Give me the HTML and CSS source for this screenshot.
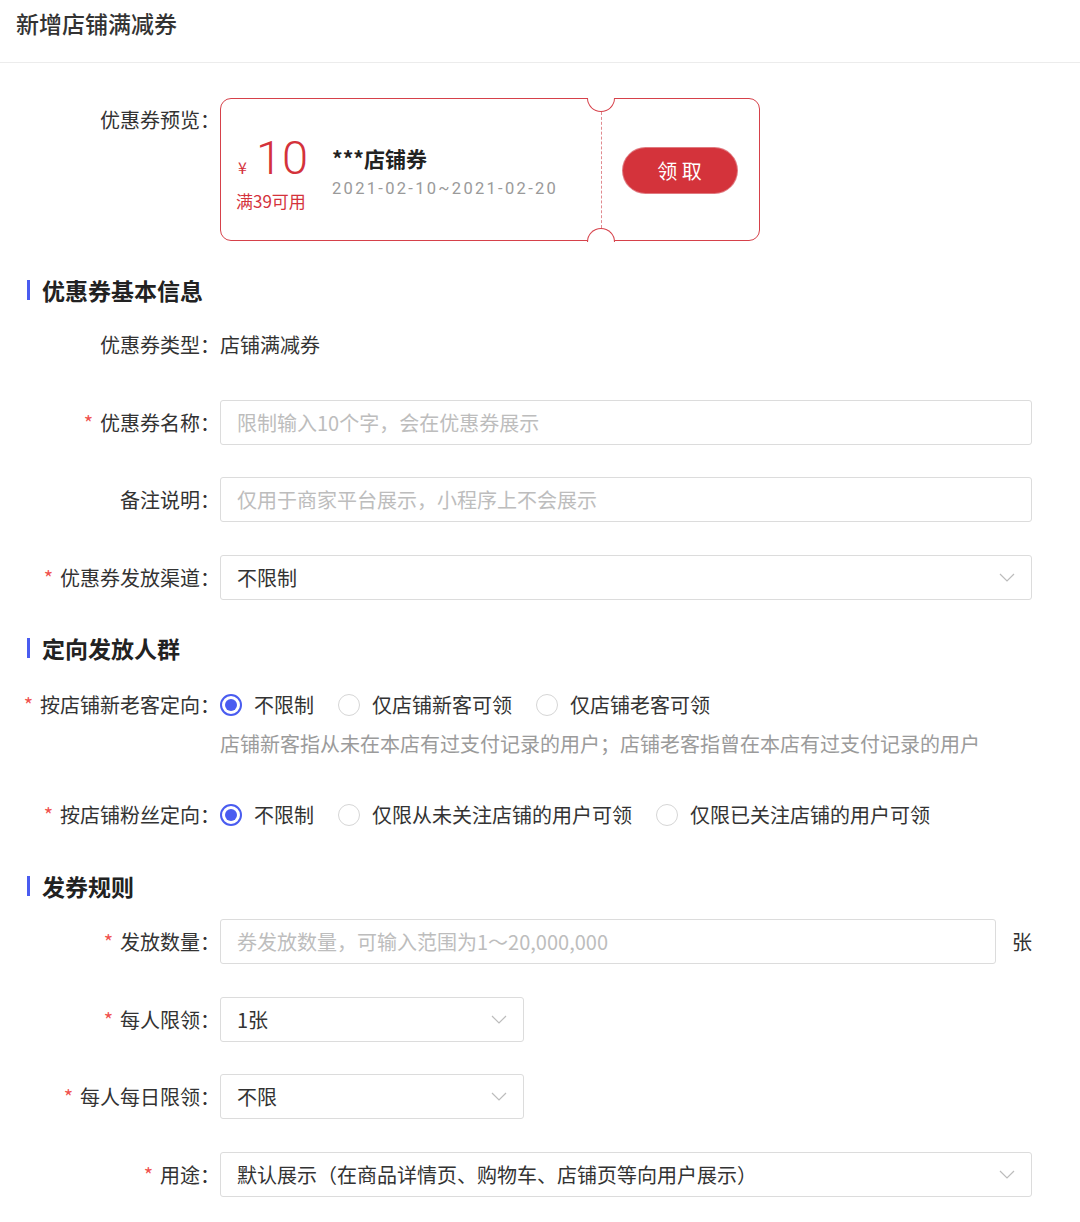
FILE: index.html
```html
<!DOCTYPE html>
<html lang="zh-CN">
<head>
<meta charset="utf-8">
<title>新增店铺满减券</title>
<link rel="stylesheet" href="styles.css">
</head>
<body>
<div class="page">
  <header class="topbar">
    <h1 class="title">新增店铺满减券</h1>
  </header>
  <main class="form">
    <div class="row row-preview">
      <div class="label label-top">优惠券预览：</div>
      <div class="coupon">
        <div class="coupon-main">
          <div class="coupon-amount">
            <div class="price"><span class="yen">¥</span><span class="num">10</span></div>
            <div class="cond">满39可用</div>
          </div>
          <div class="coupon-info">
            <div class="coupon-name">***店铺券</div>
            <div class="coupon-date">2021-02-10~2021-02-20</div>
          </div>
        </div>
        <div class="coupon-side">
          <span class="btn-get">领 取</span>
        </div>
        <span class="notch notch-top"></span>
        <span class="notch notch-bottom"></span>
      </div>
    </div>

    <h2 class="section s1">优惠券基本信息</h2>

    <div class="row r-type">
      <div class="label">优惠券类型：</div>
      <div class="value">店铺满减券</div>
    </div>

    <div class="row r-gap">
      <div class="label"><span class="star">*</span>优惠券名称：</div>
      <div class="input"><span class="ph">限制输入10个字，会在优惠券展示</span></div>
    </div>

    <div class="row r-gap2">
      <div class="label">备注说明：</div>
      <div class="input"><span class="ph">仅用于商家平台展示，小程序上不会展示</span></div>
    </div>

    <div class="row r-gap">
      <div class="label"><span class="star">*</span>优惠券发放渠道：</div>
      <div class="input select"><span class="val">不限制</span>
        <svg class="chev" width="16" height="9" viewBox="0 0 16 9"><polyline points="1,1 8,8 15,1" fill="none" stroke="#bcbcbc" stroke-width="1.2"/></svg>
      </div>
    </div>

    <h2 class="section s2">定向发放人群</h2>

    <div class="row r-radio1">
      <div class="label"><span class="star">*</span>按店铺新老客定向：</div>
      <div class="radios">
        <span class="radio on"></span><span class="rtext">不限制</span>
        <span class="radio"></span><span class="rtext">仅店铺新客可领</span>
        <span class="radio"></span><span class="rtext">仅店铺老客可领</span>
      </div>
    </div>
    <div class="hint">店铺新客指从未在本店有过支付记录的用户；店铺老客指曾在本店有过支付记录的用户</div>

    <div class="row r-radio2">
      <div class="label"><span class="star">*</span>按店铺粉丝定向：</div>
      <div class="radios">
        <span class="radio on"></span><span class="rtext">不限制</span>
        <span class="radio"></span><span class="rtext">仅限从未关注店铺的用户可领</span>
        <span class="radio"></span><span class="rtext">仅限已关注店铺的用户可领</span>
      </div>
    </div>

    <h2 class="section s3">发券规则</h2>

    <div class="row r-count">
      <div class="label"><span class="star">*</span>发放数量：</div>
      <div class="input"><span class="ph">券发放数量，可输入范围为1～20,000,000</span></div>
      <span class="unit">张</span>
    </div>

    <div class="row r-gap">
      <div class="label"><span class="star">*</span>每人限领：</div>
      <div class="input select small"><span class="val">1张</span>
        <svg class="chev" width="16" height="9" viewBox="0 0 16 9"><polyline points="1,1 8,8 15,1" fill="none" stroke="#bcbcbc" stroke-width="1.2"/></svg>
      </div>
    </div>

    <div class="row r-gap2">
      <div class="label"><span class="star">*</span>每人每日限领：</div>
      <div class="input select small"><span class="val">不限</span>
        <svg class="chev" width="16" height="9" viewBox="0 0 16 9"><polyline points="1,1 8,8 15,1" fill="none" stroke="#bcbcbc" stroke-width="1.2"/></svg>
      </div>
    </div>

    <div class="row r-gap">
      <div class="label"><span class="star">*</span>用途：</div>
      <div class="input select"><span class="val">默认展示（在商品详情页、购物车、店铺页等向用户展示）</span>
        <svg class="chev" width="16" height="9" viewBox="0 0 16 9"><polyline points="1,1 8,8 15,1" fill="none" stroke="#bcbcbc" stroke-width="1.2"/></svg>
      </div>
    </div>
  </main>
</div>
</body>
</html>
```

FILE: styles.css
```css
* { box-sizing: border-box; }
html, body { margin: 0; padding: 0; background: #fff; }
body {
  font-family: "Noto Sans CJK SC", "Noto Sans", sans-serif;
  color: #333;
  font-size: 20px;
}
.page { width: 1080px; min-height: 1222px; }

.topbar {
  height: 63px;
  border-bottom: 1px solid #ececec;
  padding: 0 16px;
}
.title {
  margin: 0;
  font-size: 23px;
  font-weight: 500;
  line-height: 46px;
  color: #333;
}

.form { padding: 0 48px 0 0; }

.row { display: flex; align-items: center; height: 45px; }
.label {
  width: 220px;
  flex: none;
  text-align: right;
  line-height: 45px;
  color: #333;
  white-space: nowrap;
}
.label-top { align-self: flex-start; line-height: 44px; }
.star {
  color: #f0524e;
  font-size: 20px;
  line-height: 1;
  margin-right: 7px;
  display: inline-block;
  vertical-align: baseline;
}
.value { color: #333; line-height: 45px; }

/* coupon */
.row-preview { margin-top: 35px; align-items: flex-start; height: auto; }
.coupon {
  position: relative;
  width: 540px;
  height: 143px;
  border: 1.5px solid #d6414a;
  border-radius: 11px;
  display: flex;
}
.coupon-main {
  width: 380px;
  display: flex;
  align-items: center;
  padding-left: 15px;
}
.coupon-amount { width: 96px; display: flex; flex-direction: column; align-items: flex-start; margin-top: 8px; }
.price { color: #d4323b; display: flex; align-items: baseline; padding-left: 2px; }
.yen { font-size: 16px; margin-right: 9px; font-family: "Noto Sans CJK SC", sans-serif; }
.num { font-family: Roboto, "Liberation Sans", sans-serif; font-weight: 300; font-size: 47px; line-height: 46px; }
.cond { color: #d4323b; font-size: 17px; line-height: 22px; margin-top: 9px; }
.coupon-info { display: flex; flex-direction: column; margin-top: 2px; }
.coupon-name { font-size: 21px; font-weight: 700; color: #222; line-height: 28px; }
.coupon-date {
  font-family: Roboto, "Liberation Sans", sans-serif;
  font-size: 16.5px;
  color: #9a9a9a;
  letter-spacing: 2.3px;
  margin-top: 7px;
}
.coupon-side {
  flex: 1;
  margin: 13px 0 12px;
  border-left: 1px dashed #e08a8f;
  display: flex;
  align-items: center;
  justify-content: center;
}
.btn-get {
  width: 114px;
  height: 45px;
  border-radius: 23px;
  background: #d4333b;
  color: #fff;
  font-size: 20px;
  line-height: 45px;
  text-align: center;
  box-shadow: 0 0 0 1px #e07a80;
  margin-left: -2px;
}
.notch {
  position: absolute;
  left: 366px;
  width: 28px;
  height: 14px;
  background: #fff;
  border: 1.5px solid #d6414a;
}
.notch-top { top: -1.5px; border-top: none; border-radius: 0 0 14px 14px; }
.notch-bottom { bottom: -1.5px; border-bottom: none; border-radius: 14px 14px 0 0; }

/* section heading */
.section {
  margin: 0;
  display: flex;
  align-items: center;
  font-size: 23px;
  font-weight: 700;
  color: #222;
  height: 28px;
  line-height: 28px;
  padding-left: 27px;
}
.section::before {
  content: "";
  width: 3px;
  height: 20px;
  background: #4a5cf0;
  margin-right: 12px;
}
.s1 { margin-top: 35px; }
.s2 { margin-top: 34px; }
.s3 { margin-top: 35px; }

.r-type { margin-top: 18px; }
.r-gap { margin-top: 33px; }
.r-gap2 { margin-top: 32px; }

.input {
  flex: 1;
  height: 45px;
  border: 1px solid #dcdcdc;
  border-radius: 3px;
  padding: 0 16px;
  display: flex;
  align-items: center;
  background: #fff;
}
.ph { color: #bdbdbd; }
.select { justify-content: space-between; }
.select .val { color: #333; }
.chev { flex: none; }
.small { flex: none; width: 304px; }

.r-count { margin-top: 19px; }
.unit { width: 36px; text-align: right; flex: none; color: #333; }

/* radios */
.r-radio1 { margin-top: 20px; }
.r-radio2 { margin-top: 34px; }
.radios { display: flex; align-items: center; }
.radio {
  width: 22px;
  height: 22px;
  border-radius: 50%;
  border: 1px solid #d6d6d6;
  flex: none;
  position: relative;
  margin-right: 12px;
}
.radio.on { border: 2px solid #4a5cf0; }
.radio.on::after {
  content: "";
  position: absolute;
  left: 3px;
  top: 3px;
  width: 12px;
  height: 12px;
  border-radius: 50%;
  background: #4a5cf0;
}
.rtext { margin-right: 24px; color: #333; }
.hint {
  margin-top: 3px;
  padding-left: 220px;
  color: #9b9b9b;
  line-height: 28px;
}
```
